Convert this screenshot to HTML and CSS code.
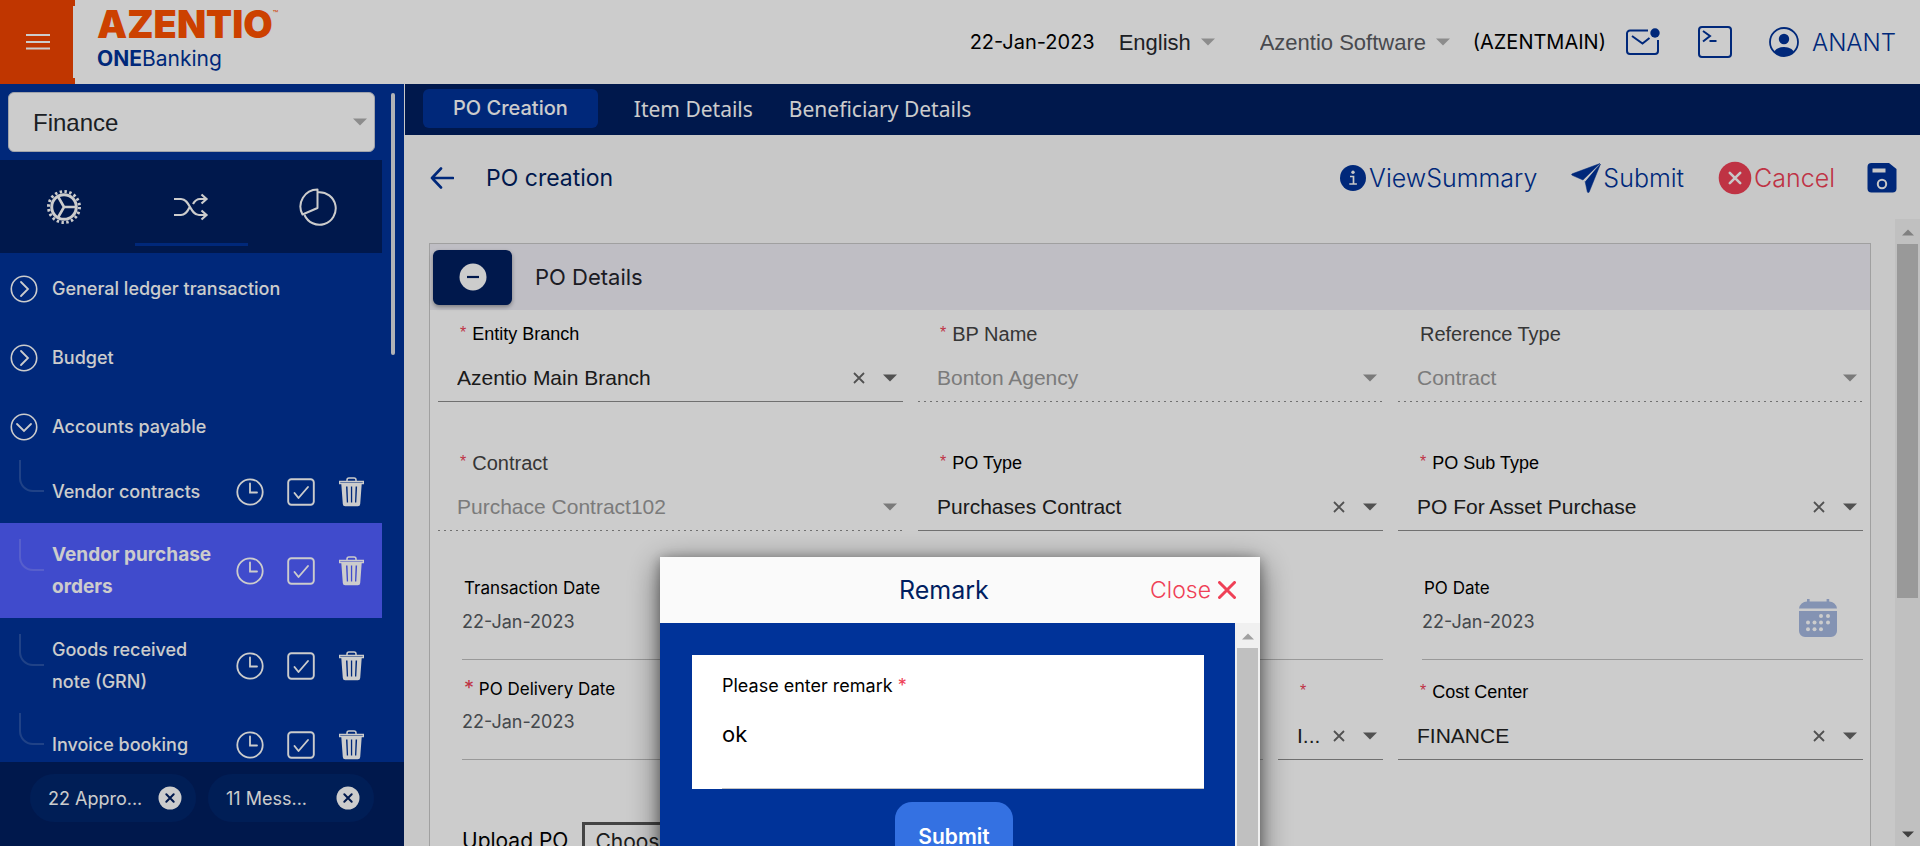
FILE: index.html
```
<!DOCTYPE html>
<html lang="en">
<head>
<meta charset="utf-8">
<title>PO creation - Azentio ONEBanking</title>
<link rel="stylesheet" href="styles.css">
</head>
<body>
<svg class="defs" aria-hidden="true">
  <symbol id="caret" viewBox="0 0 14 8"><path d="M0 0.5h14L7 7.5z" fill="currentColor"/></symbol>
  <symbol id="x" viewBox="0 0 12 12"><path d="M1 1l10 10M11 1L1 11" fill="none" stroke="currentColor" stroke-width="1.8"/></symbol>
  <symbol id="go" viewBox="0 0 28 28"><circle cx="14" cy="14" r="12.7" fill="none" stroke="currentColor" stroke-width="1.6"/><path d="M11 7l7 7-7 7" fill="none" stroke="currentColor" stroke-width="1.8" stroke-linecap="round"/></symbol>
  <symbol id="down" viewBox="0 0 28 28"><circle cx="14" cy="14" r="12.7" fill="none" stroke="currentColor" stroke-width="1.6"/><path d="M7 11l7 7 7-7" fill="none" stroke="currentColor" stroke-width="1.8" stroke-linecap="round"/></symbol>
  <symbol id="clock" viewBox="0 0 28 28"><circle cx="14" cy="14" r="12.7" fill="none" stroke="currentColor" stroke-width="1.8"/><path d="M14 5.5V14.5h7" fill="none" stroke="currentColor" stroke-width="1.8" stroke-linecap="round"/></symbol>
  <symbol id="check" viewBox="0 0 28 28"><rect x="1.2" y="1.2" width="25.6" height="25.6" rx="3.2" fill="none" stroke="currentColor" stroke-width="1.9"/><path d="M7.5 15l4 5L21 9" fill="none" stroke="currentColor" stroke-width="1.9" stroke-linecap="round" stroke-linejoin="round"/></symbol>
  <symbol id="trash" viewBox="0 0 25 30"><path d="M.5 4.5h24v2h-24zM8 4.5V3a2 2 0 0 1 2-2h5a2 2 0 0 1 2 2v1.5" fill="none" stroke="currentColor" stroke-width="1.5"/><path fill="currentColor" fill-rule="evenodd" d="M2.3 7h20.4L21.2 27a2.4 2.4 0 0 1-2.4 2.3H6.2A2.4 2.4 0 0 1 3.8 27zM7 9.500l.8 16h1.300l-.6-16zM11.900 9.500v16h1.300v-16zM16.600 9.500l-.6 16h1.300l.8-16z"/></symbol>
  <symbol id="xc" viewBox="0 0 24 24"><circle cx="12" cy="12" r="11.500" fill="currentColor"/><path d="M8.300 8.300l7.400 7.400M15.700 8.300l-7.400 7.400" stroke="#001e60" stroke-width="2" stroke-linecap="round"/></symbol>
</svg>

<div class="page">
  <header class="top">
    <button class="menu" aria-label="Menu"><svg width="24" height="18" viewBox="0 0 24 18"><path d="M0 2h24M0 9h24M0 15.500h24" stroke="#fff" stroke-width="2"/></svg></button>
    <a class="brand" href="#"><span class="mark">AZENTIO<sup>™</sup></span><span class="sub"><b>ONE</b>Banking</span></a>
    <div class="tools">
      <span class="txt">22-Jan-2023</span>
      <label class="pick lang"><select aria-label="Language"><option>English</option></select><svg class="caret"><use href="#caret"/></svg></label>
      <label class="pick org"><select aria-label="Organisation"><option>Azentio Software</option></select><svg class="caret"><use href="#caret"/></svg></label>
      <span class="txt">(AZENTMAIN)</span>
      <button class="mail" aria-label="Messages"><svg width="34" height="28" viewBox="0 0 34 28"><path d="M22 2.500H4a3 3 0 0 0-3 3V23a3 3 0 0 0 3 3h25a3 3 0 0 0 3-3V12" fill="none" stroke="currentColor" stroke-width="2"/><path d="M6 8l10.500 7.500L23.500 10" fill="none" stroke="currentColor" stroke-width="2"/><circle cx="29" cy="5" r="4.700" fill="currentColor"/></svg></button>
      <button class="term" aria-label="Console"><svg width="34" height="32" viewBox="0 0 34 32"><rect x="1" y="1" width="32" height="30" rx="3" fill="none" stroke="currentColor" stroke-width="2"/><path d="M5 5l7 5-7 5.500M11.500 15h7" fill="none" stroke="currentColor" stroke-width="2"/></svg></button>
      <a class="user" href="#"><svg width="30" height="30" viewBox="0 0 30 30"><clipPath id="uc"><circle cx="15" cy="15" r="14"/></clipPath><circle cx="15" cy="15" r="14" fill="none" stroke="currentColor" stroke-width="1.800"/><circle cx="15" cy="12" r="5.200" fill="currentColor"/><ellipse cx="15" cy="27" rx="10.500" ry="7" fill="currentColor" clip-path="url(#uc)"/></svg>ANANT</a>
    </div>
  </header>

  <div class="body">
    <aside class="side">
      <div class="scroll">
        <div class="col">
          <label class="module"><select aria-label="Module"><option>Finance</option></select><svg class="caret"><use href="#caret"/></svg></label>
          <div class="modes">
            <button aria-label="Setup"><svg width="36" height="36" viewBox="0 0 36 36" fill="none" stroke="currentColor"><circle cx="18" cy="18" r="12.300" stroke-width="3"/><circle cx="18" cy="18" r="15.500" stroke-width="3" stroke-dasharray="2.430 2.439"/><path d="M18 18h12M18 18l-6-10.500M18 18l-6 10.500" stroke-width="2.600"/></svg></button>
            <button class="on" aria-label="Transactions"><svg width="36" height="28" viewBox="0 0 36 28" fill="none" stroke="currentColor" stroke-width="2.200"><path d="M1 6h7c9 0 9 16 18 16h7M1 22h7c4 0 6.500-3.500 8.500-7.500M20 11c2-3.500 4-5 7-5h6M28.500 1.500L33.500 6l-5 4.500M28.500 17.500l5 4.500-5 4.500"/></svg></button>
            <button aria-label="Reports"><svg width="38" height="38" viewBox="0 0 38 38" fill="none" stroke="currentColor" stroke-width="2" stroke-linejoin="round"><path d="M18.500 1.500V20L3.500 26.500A17 17 0 0 1 18.500 1.500z"/><path d="M19 4.200A16.300 16.300 0 1 1 5.500 27"/></svg></button>
          </div>
          <nav class="tree">
            <a class="grp" href="#"><svg><use href="#go"/></svg>General ledger transaction</a>
            <a class="grp" href="#"><svg><use href="#go"/></svg>Budget</a>
            <a class="grp" href="#"><svg><use href="#down"/></svg>Accounts payable</a>
            <div class="leaf"><i></i><a href="#">Vendor contracts</a><button aria-label="History"><svg><use href="#clock"/></svg></button><button aria-label="Approve"><svg><use href="#check"/></svg></button><button aria-label="Delete"><svg class="bin"><use href="#trash"/></svg></button></div>
            <div class="leaf on"><i></i><a href="#">Vendor purchase orders</a><button aria-label="History"><svg><use href="#clock"/></svg></button><button aria-label="Approve"><svg><use href="#check"/></svg></button><button aria-label="Delete"><svg class="bin"><use href="#trash"/></svg></button></div>
            <div class="leaf"><i></i><a href="#">Goods received note (GRN)</a><button aria-label="History"><svg><use href="#clock"/></svg></button><button aria-label="Approve"><svg><use href="#check"/></svg></button><button aria-label="Delete"><svg class="bin"><use href="#trash"/></svg></button></div>
            <div class="leaf"><i></i><a href="#">Invoice booking</a><button aria-label="History"><svg><use href="#clock"/></svg></button><button aria-label="Approve"><svg><use href="#check"/></svg></button><button aria-label="Delete"><svg class="bin"><use href="#trash"/></svg></button></div>
          </nav>
        </div>
        <div class="thumb"></div>
      </div>
      <footer class="chips">
        <div class="chip"><span>22 Appro...</span><button aria-label="Dismiss approvals"><svg><use href="#xc"/></svg></button></div>
        <div class="chip"><span>11 Mess...</span><button aria-label="Dismiss messages"><svg><use href="#xc"/></svg></button></div>
      </footer>
    </aside>

    <main class="main">
      <nav class="tabs"><a class="on" href="#">PO Creation</a><a href="#">Item Details</a><a href="#">Beneficiary Details</a></nav>
      <div class="bar">
        <button class="back" aria-label="Back"><svg width="24" height="22" viewBox="0 0 24 22"><path d="M23 11H2M11 1.500L2 11l9 9.500" fill="none" stroke="currentColor" stroke-width="2.600" stroke-linecap="round" stroke-linejoin="round"/></svg></button>
        <h1>PO creation</h1>
        <button class="act info"><svg width="26" height="26" viewBox="0 0 26 26"><circle cx="13" cy="13" r="13" fill="currentColor"/><circle cx="13" cy="7.300" r="1.700" fill="#fafafa"/><path d="M10 11.500h3.500V19M9.300 19h7.600" fill="none" stroke="#fafafa" stroke-width="1.700"/></svg>ViewSummary</button>
        <button class="act"><svg width="30" height="30" viewBox="0 0 30 30"><path d="M29 .5L1.200 10.800a.8.800 0 0 0 0 1.500L12 17 29 .500zM29.500 1L14 18l2.300 10.800a1 1 0 0 0 1.900.2z" fill="currentColor" stroke="currentColor" stroke-width=".5"/><path d="M12 17.600L25 5.200 14.200 18.500z" fill="#fafafa"/></svg>Submit</button>
        <button class="act red"><svg width="34" height="34" viewBox="0 0 34 34"><circle cx="17" cy="17" r="16.300" fill="currentColor"/><path d="M11.800 11.800l10.400 10.400M22.200 11.800L11.800 22.200" stroke="#fafafa" stroke-width="2.600" stroke-linecap="round"/></svg>Cancel</button>
        <button class="act save" aria-label="Save"><svg width="30" height="30" viewBox="0 0 30 30"><path d="M4.500 0H22l7.500 6v19.500a4 4 0 0 1-4 4h-21a4 4 0 0 1-4-4V4a4 4 0 0 1 4-4z" fill="currentColor"/><path d="M5.500 5.500h13v4h-13z" fill="#fafafa"/><circle cx="15" cy="21" r="4.200" fill="none" stroke="#fafafa" stroke-width="2"/></svg></button>
      </div>
      <div class="view">
        <section class="panel">
          <header class="phead"><button aria-label="Collapse"><svg width="28" height="28" viewBox="0 0 28 28"><circle cx="14" cy="14" r="13.500" fill="#fff"/><path d="M8 14h12" stroke="#001e60" stroke-width="2.200"/></svg></button><h2>PO Details</h2></header>
          <form class="form">
            <div class="row">
              <div class="field"><label for="f1"><em>*</em> Entity Branch</label><div class="ctl"><select id="f1"><option>Azentio Main Branch</option></select><button type="button" aria-label="Clear"><svg><use href="#x"/></svg></button><svg class="caret"><use href="#caret"/></svg></div></div>
              <div class="field off"><label for="f2"><em>*</em> BP Name</label><div class="ctl"><select id="f2" disabled><option>Bonton Agency</option></select><svg class="caret"><use href="#caret"/></svg></div></div>
              <div class="field off"><label for="f3">Reference Type</label><div class="ctl"><select id="f3" disabled><option>Contract</option></select><svg class="caret"><use href="#caret"/></svg></div></div>
            </div>
            <div class="row">
              <div class="field off"><label for="f4"><em>*</em> Contract</label><div class="ctl"><select id="f4" disabled><option>Purchace Contract102</option></select><svg class="caret"><use href="#caret"/></svg></div></div>
              <div class="field"><label for="f5"><em>*</em> PO Type</label><div class="ctl"><select id="f5"><option>Purchases Contract</option></select><button type="button" aria-label="Clear"><svg><use href="#x"/></svg></button><svg class="caret"><use href="#caret"/></svg></div></div>
              <div class="field"><label for="f6"><em>*</em> PO Sub Type</label><div class="ctl"><select id="f6"><option>PO For Asset Purchase</option></select><button type="button" aria-label="Clear"><svg><use href="#x"/></svg></button><svg class="caret"><use href="#caret"/></svg></div></div>
            </div>
            <div class="row">
              <div class="date"><div class="dt"><label for="f7">Transaction Date</label><input id="f7" value="22-Jan-2023"></div></div>
              <div class="date"></div>
              <div class="date"><div class="dt"><label for="f8">PO Date</label><input id="f8" value="22-Jan-2023"></div>
                <button type="button" aria-label="Open calendar"><svg width="38" height="38" viewBox="0 0 38 38"><path d="M8 0h2.600v2.500h17V0h2.600v2.500A8 8 0 0 1 38 9.500H0a8 8 0 0 1 8-7zM0 12h38v20a6 6 0 0 1-6 6H6a6 6 0 0 1-6-6z" fill="#a6b8e0"/><g fill="#fff"><circle cx="22" cy="17" r="2"/><circle cx="29" cy="17" r="2"/><circle cx="9" cy="23.500" r="2"/><circle cx="15.500" cy="23.500" r="2"/><circle cx="22" cy="23.500" r="2"/><circle cx="29" cy="23.500" r="2"/><circle cx="9" cy="30.200" r="2"/><circle cx="15.500" cy="30.200" r="2"/><circle cx="22" cy="30.200" r="2"/></g></svg></button></div>
            </div>
            <div class="row tight">
              <div class="date"><div class="dt"><label for="f9"><em>*</em> PO Delivery Date</label><input id="f9" value="22-Jan-2023"></div></div>
              <div class="split">
                <div class="date wide"></div>
                <div class="field"><label for="f10"><em>*</em></label><div class="ctl"><select id="f10" aria-label="Currency"><option>I...</option></select><button type="button" aria-label="Clear"><svg><use href="#x"/></svg></button><svg class="caret"><use href="#caret"/></svg></div></div>
              </div>
              <div class="field"><label for="f11"><em>*</em> Cost Center</label><div class="ctl"><select id="f11"><option>FINANCE</option></select><button type="button" aria-label="Clear"><svg><use href="#x"/></svg></button><svg class="caret"><use href="#caret"/></svg></div></div>
            </div>
            <div class="upload"><span>Upload PO</span><button type="button">Choose File</button></div>
          </form>
        </section>
        <div class="sbar"><svg class="caret up"><use href="#caret"/></svg><div class="grip"></div><svg class="caret"><use href="#caret"/></svg></div>
      </div>
    </main>
  </div>
</div>

<div class="shade">
  <div class="modal" role="dialog" aria-label="Remark">
    <header class="mhead"><h2>Remark</h2><button class="close">Close <svg width="18" height="18" viewBox="0 0 18 18"><path d="M1.500 1.500l15 15M16.500 1.500l-15 15" stroke="currentColor" stroke-width="3" stroke-linecap="round"/></svg></button></header>
    <div class="mwrap">
      <div class="mbody">
        <div class="card"><label for="rm">Please enter remark <em>*</em></label><input id="rm" value="ok"></div>
        <button class="send">Submit</button>
      </div>
      <div class="sbar light"><svg class="caret up"><use href="#caret"/></svg><div class="grip"></div></div>
    </div>
  </div>
</div>
</body>
</html>
```
FILE: styles.css
```
* { box-sizing: border-box; }
html, body { height: 100%; margin: 0; overflow: hidden; }
body { font-family: Inter, sans-serif; font-size: 20px; color: #000; background: #fafafa; }
button { border: 0; padding: 0; margin: 0; background: none; color: inherit; font: inherit; display: flex; align-items: center; justify-content: center; flex: none; }
select, input { appearance: none; border: 0; border-radius: 0; padding: 0; margin: 0; background: none; font: inherit; color: inherit; outline: 0; opacity: 1; min-width: 0; }
a { color: inherit; text-decoration: none; }
h1, h2 { margin: 0; font-weight: 400; }
em { color: #ef4056; font-style: normal; }
svg { flex: none; display: block; }
.defs { position: absolute; width: 0; height: 0; }
.caret { width: 14px; height: 8px; }

.page { height: 100%; display: flex; flex-direction: column; }
.top { height: 84px; flex: none; display: flex; background: #fff; }
.menu { width: 75px; background: #f04400; position: relative; }
.menu::after { content: ""; position: absolute; right: 0; top: 6px; bottom: 6px; width: 2px; background: #fff; }
.brand { display: flex; flex-direction: column; padding: 4px 0 0 22px; }
.mark { display: flex; font-size: 38px; line-height: 40px; font-weight: 900; color: #ff5200; }
.mark sup { font-size: 9px; line-height: 16px; font-weight: 400; padding-top: 2px; }
.sub { font-size: 21px; line-height: 30px; color: #003399; }
.tools { margin-left: auto; display: flex; align-items: center; padding-right: 24px; color: #003399; }
.txt { color: #000; }
.pick { display: flex; align-items: center; gap: 9px; font: 22px "Liberation Sans", sans-serif; color: #26282d; }
.pick .caret { color: #b0b0b0; }
.lang { margin-left: 24px; }
.org { margin: 0 23px 0 45px; color: #5a5c62; }
.mail { margin-left: 20px; }
.term { margin-left: 38px; }
.user { display: flex; align-items: center; gap: 13px; margin-left: 37px; font-size: 24px; font-weight: 300; }

.body { flex: 1; min-height: 0; display: flex; }
.side { width: 405px; flex: none; display: flex; flex-direction: column; background: #003399; border-right: 1px solid #fafafa; color: #fff; }
.scroll { flex: 1; min-height: 0; overflow: hidden; display: flex; gap: 9px; }
.col { width: 382px; padding-top: 8px; }
.thumb { width: 4px; height: 262px; margin-top: 9px; border-radius: 2px; background: #dcdfe4; }
.module { display: flex; align-items: center; height: 60px; margin: 0 7px 0 8px; padding: 0 7px 0 24px; border: 1px solid #c8ccd6; border-radius: 6px; background: #fff; font: 24px "Liberation Sans", sans-serif; color: #24272c; }
.module select { flex: 1; }
.module .caret { color: #b0b0b0; }
.modes { display: flex; height: 93px; margin-top: 8px; background: #001e60; }
.modes button { flex: 1; }
.modes button.on { position: relative; }
.modes button.on::after { content: ""; position: absolute; left: 8px; right: 7px; bottom: 7px; height: 3px; background: #003399; }
.tree { font-weight: 500; font-size: 18px; line-height: 32px; }
.grp { display: flex; align-items: center; gap: 14px; height: 69px; padding: 2px 0 0 10px; }
.grp svg, .leaf svg { width: 28px; height: 28px; }
.leaf { display: flex; align-items: center; padding: 16px 18px 15px 19px; }
.leaf i { align-self: center; width: 25px; height: 32px; margin: -32px 0 0; border: solid rgba(255,255,255,.16); border-width: 0 0 2px 2px; border-bottom-left-radius: 14px; }
.leaf a { flex: 1; margin-left: 8px; padding-right: 12px; }
.leaf button { margin-left: 23px; }
.leaf button:last-child { margin-left: 24px; }
.leaf a + button { margin-left: 0; }
.leaf .bin { width: 25px; height: 30px; }
.leaf.on { background: #515eff; font-weight: 700; font-size: 19px; }
.chips { height: 84px; flex: none; display: flex; gap: 12px; padding: 12px 30px; background: #001e60; }
.chip { flex: 1; height: 48px; border-radius: 24px; background: #00266c; display: flex; align-items: center; justify-content: space-between; padding: 0 14px 0 18px; font-size: 18px; }
.chip svg { width: 24px; height: 24px; }

.main { flex: 1; min-width: 0; display: flex; flex-direction: column; }
.tabs { height: 51px; flex: none; display: flex; align-items: center; gap: 36px; padding: 0 18px 2px; background: #001e60; color: #fff; font-family: "Noto Sans", sans-serif; font-size: 21px; }
.tabs .on { padding: 0 30px; line-height: 39px; border-radius: 6px; background: #003399; font-family: Inter, sans-serif; font-size: 20px; font-weight: 500; }
.bar { height: 84px; flex: none; display: flex; align-items: center; padding: 2px 23px 0 25px; color: #003399; }
.bar h1 { margin: 0 auto 0 32px; font-size: 23px; color: #001e60; }
.act { gap: 2px; margin-left: 34px; font-size: 25px; font-weight: 300; }
.info { gap: 3px; }
.save { margin-left: 32px; }
.red { color: #ef4056; }
.view { flex: 1; min-height: 0; overflow: hidden; display: flex; }
.panel { flex: 1; margin: 24px 24px 0; border: 1px solid #c8c8c8; border-bottom: 0; background: #fff; min-height: 700px; }
.phead { display: flex; align-items: center; height: 66px; padding: 0 3px; background: #efeef6; }
.phead button { width: 79px; height: 55px; border-radius: 6px; background: #001e60; box-shadow: 0 2px 4px rgba(0,0,0,.35); }
.phead h2 { margin-left: 23px; font-size: 22px; color: #24242c; }
.form { padding: 0 7px 0 8px; }
.row { display: grid; grid-template-columns: repeat(3, 1fr); gap: 15px; margin-bottom: 37px; }
.row.tight { margin-top: -29px; }
.field { font-family: "Liberation Sans", sans-serif; min-width: 0; }
.field label { display: flex; gap: 6px; height: 48px; line-height: 48px; padding-left: 22px; font-size: 18px; }
.field em { font-size: 16px; line-height: 46px; }
.ctl { display: flex; align-items: center; height: 44px; padding: 0 6px 4px 19px; border-bottom: 1px solid #8c8c8c; font-size: 21px; color: #222; }
.ctl select { flex: 1; }
.ctl button svg { width: 12px; height: 12px; margin-right: 18px; color: #666; }
.ctl .caret { color: #666; }
.off label { color: #444; font-size: 20px; }
.off .ctl { border-bottom: 0; padding-bottom: 5px; background: repeating-linear-gradient(90deg, #8c8c8c 0 2px, transparent 2px 6px) bottom / 100% 1px no-repeat; color: #9a9a9a; }
.off .ctl .caret { color: #999; }
.date { display: flex; justify-content: space-between; height: 92px; margin-left: 24px; border-bottom: 1px solid #c0c0c0; }
.dt { display: flex; flex-direction: column; flex: 1; min-width: 0; }
.dt label { height: 40px; line-height: 40px; padding-left: 2px; font-size: 17px; }
.dt em { font-size: 20px; }
.dt input { height: 26px; font-size: 18px; color: #555a60; }
.date button { align-self: flex-start; margin: 31px 26px 0 0; }
.split { display: flex; gap: 15px; }
.split .wide { flex: 1; }
.split .field { width: 105px; }
.upload { display: flex; align-items: flex-start; gap: 14px; margin-left: 24px; padding-top: 25px; font-size: 21px; line-height: 38px; }
.upload button { border: 3px solid #555; padding: 0 10px; height: 40px; color: #222; background: #fff; }

.sbar { width: 25px; flex: none; display: flex; flex-direction: column; align-items: center; gap: 8px; padding: 8px 0; background: #f0f0f0; }
.sbar .caret { width: 12px; height: 7px; color: #505050; }
.sbar .up { transform: rotate(180deg); color: #a0a0a0; margin-top: 2px; }
.grip { width: 21px; height: 354px; background: #c0c0c0; margin-bottom: auto; }
.light .grip { height: 400px; }

.shade { position: fixed; inset: 0; overflow: hidden; display: flex; justify-content: center; align-items: flex-start; padding-top: 557px; background: rgba(0,0,0,.2); }
.modal { width: 600px; flex: none; box-shadow: 0 8px 30px rgba(0,0,0,.55), 0 2px 12px rgba(0,0,0,.35); }
.mhead { display: flex; align-items: center; height: 66px; padding: 0 24px 0 239px; background: #fafafa; }
.mhead h2 { font-size: 25px; color: #001e60; }
.close { margin-left: auto; gap: 7px; font-size: 23px; font-weight: 300; color: #ef4056; }
.mwrap { display: flex; height: 340px; }
.mbody { flex: 1; display: flex; flex-direction: column; align-items: center; padding: 32px 31px 0 32px; background: #003399; }
.card { align-self: stretch; display: flex; flex-direction: column; height: 134px; padding: 14px 0 0 30px; background: #fff; }
.card label { font-size: 18px; line-height: 34px; }
.card input { flex: 1; padding-bottom: 24px; font-size: 22px; border-bottom: 1px solid #c4c4c4; }
.send { width: 118px; height: 68px; margin: 13px 0 0 12px; border-radius: 17px; background: #3471e2; color: #fff; font-size: 21px; font-weight: 600; }
```
